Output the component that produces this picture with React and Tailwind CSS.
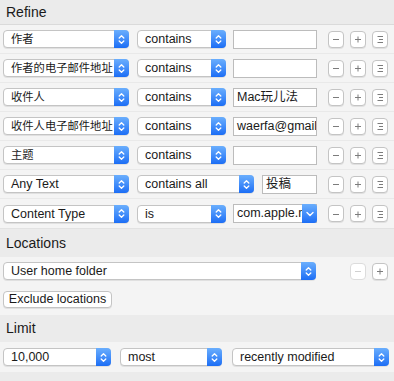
import React from "react";

const FONT = "font-['Liberation_Sans','Noto_Sans_CJK_SC',sans-serif]";

function Chevrons() {
  return (
    <svg width="7" height="11" viewBox="0 0 7 11" fill="none" stroke="white" strokeWidth="1.3" strokeLinecap="round" strokeLinejoin="round">
      <path d="M1.2 4 L3.5 1.7 L5.8 4" />
      <path d="M1.2 7 L3.5 9.3 L5.8 7" />
    </svg>
  );
}

function ChevronDown() {
  return (
    <svg width="8" height="6" viewBox="0 0 8 6" fill="none" stroke="white" strokeWidth="1.4" strokeLinecap="round" strokeLinejoin="round">
      <path d="M1 1.5 L4 4.5 L7 1.5" />
    </svg>
  );
}

function Popup({ w, children, cjk }) {
  return (
    <div className={`flex h-[18px] shrink-0 items-stretch rounded-[4px] border border-[#c4c4c4] bg-white shadow-[0_1px_0_rgba(0,0,0,0.08)] ${w}`}>
      <div
        className={`flex-1 overflow-hidden whitespace-nowrap pl-[7px] leading-[16px] text-[#1a1a1a] ${
          cjk ? "text-[11.3px]" : "text-[12.5px]"
        }`}
      >
        {children}
      </div>
      <div className="-my-px -mr-px flex w-[15px] items-center justify-center rounded-r-[4px] bg-gradient-to-b from-[#6aaefd] to-[#1b6df5]">
        <Chevrons />
      </div>
    </div>
  );
}

function Field({ w, children, combo }) {
  return (
    <div className={`flex h-[19px] shrink-0 items-stretch border border-[#bcbcbc] bg-white ${w}`}>
      <div className="flex-1 overflow-hidden whitespace-nowrap pl-[3px] text-[12.5px] leading-[17px] text-[#1a1a1a]">{children}</div>
      {combo && (
        <div className="-my-px -mr-px flex w-[15px] items-center justify-center rounded-r-[3px] bg-gradient-to-b from-[#6aaefd] to-[#1b6df5]">
          <ChevronDown />
        </div>
      )}
    </div>
  );
}

function SmallButton({ kind, disabled }) {
  const stroke = disabled ? "#d0d0d0" : "#7c7c7c";
  return (
    <div
      className={`flex h-[17px] w-[16px] shrink-0 items-center justify-center rounded-[4px] border bg-white ${
        disabled ? "border-[#dcdcdc]" : "border-[#c4c4c4] shadow-[0_1px_0_rgba(0,0,0,0.08)]"
      }`}
    >
      <svg width="8" height="8" viewBox="0 0 8 8" fill="none" stroke={stroke} strokeWidth="1">
        {kind === "minus" && <path d="M1 4.5 H7" />}
        {kind === "plus" && <path d="M1 4.5 H7 M4 1.5 V7.5" />}
        {kind === "menu" && <path d="M1.5 1.5 H7 M3 4.5 H7 M1.5 7.5 H7" />}
      </svg>
    </div>
  );
}

function RowButtons() {
  return (
    <div className="ml-auto mr-[6px] flex gap-[6px]">
      <SmallButton kind="minus" />
      <SmallButton kind="plus" />
      <SmallButton kind="menu" />
    </div>
  );
}

function Band({ children, h }) {
  return (
    <div className={`flex items-center bg-[#ebebeb] px-[6px] text-[14px] text-[#1a1a1a] ${h}`}>{children}</div>
  );
}

const rules = [
  { attr: "作者", op: "contains", value: "" },
  { attr: "作者的电子邮件地址", op: "contains", value: "" },
  { attr: "收件人", op: "contains", value: "Mac玩儿法" },
  { attr: "收件人电子邮件地址", op: "contains", value: "waerfa@gmail.com" },
  { attr: "主题", op: "contains", value: "" },
];

export default function App() {
  return (
    <div className={`flex h-[381px] w-[394px] flex-col bg-[#f4f4f4] ${FONT}`}>
      <Band h="h-[25px] border-b border-[#dadada]">Refine</Band>

      {rules.map((r) => (
        <div key={r.attr} className="flex h-[29px] items-center border-b border-[#e9e9e9] pl-[3px]">
          <Popup w="w-[126px]" cjk>
            {r.attr}
          </Popup>
          <div className="ml-[8px]">
            <Popup w="w-[89px]">{r.op}</Popup>
          </div>
          <div className="ml-[7px]">
            <Field w="w-[84px]">{r.value}</Field>
          </div>
          <RowButtons />
        </div>
      ))}

      <div className="flex h-[29px] items-center border-b border-[#e9e9e9] pl-[3px]">
        <Popup w="w-[126px]">Any Text</Popup>
        <div className="ml-[8px]">
          <Popup w="w-[117px]">contains all</Popup>
        </div>
        <div className="ml-[8px]">
          <Field w="w-[55px]">投稿</Field>
        </div>
        <RowButtons />
      </div>

      <div className="flex h-[29px] items-center pl-[3px]">
        <Popup w="w-[126px]">Content Type</Popup>
        <div className="ml-[8px]">
          <Popup w="w-[89px]">is</Popup>
        </div>
        <div className="ml-[7px]">
          <Field w="w-[84px]" combo>
            com.apple.mail.emlx
          </Field>
        </div>
        <RowButtons />
      </div>

      <Band h="h-[29px] border-t border-[#e2e2e2]">Locations</Band>

      <div className="flex flex-col items-start px-[3px] pb-[7px] pt-[5px]">
        <div className="flex w-full items-center">
          <Popup w="w-[313px]">User home folder</Popup>
          <div className="ml-auto mr-[3px] flex gap-[6px]">
            <SmallButton kind="minus" disabled />
            <SmallButton kind="plus" />
          </div>
        </div>
        <button className="mt-[11px] h-[17px] w-[109px] rounded-[4px] border border-[#c4c4c4] bg-white text-[12.5px] leading-[15px] text-[#1a1a1a] shadow-[0_1px_0_rgba(0,0,0,0.08)]">
          Exclude locations
        </button>
      </div>

      <Band h="h-[27px]">Limit</Band>

      <div className="flex h-[30px] items-center pl-[3px]">
        <Popup w="w-[108px]">10,000</Popup>
        <div className="ml-[9px]">
          <Popup w="w-[102px]">most</Popup>
        </div>
        <div className="ml-[10px]">
          <Popup w="w-[157px]">recently modified</Popup>
        </div>
      </div>

      <div className="flex-1 bg-[#ebebeb]" />
    </div>
  );
}
